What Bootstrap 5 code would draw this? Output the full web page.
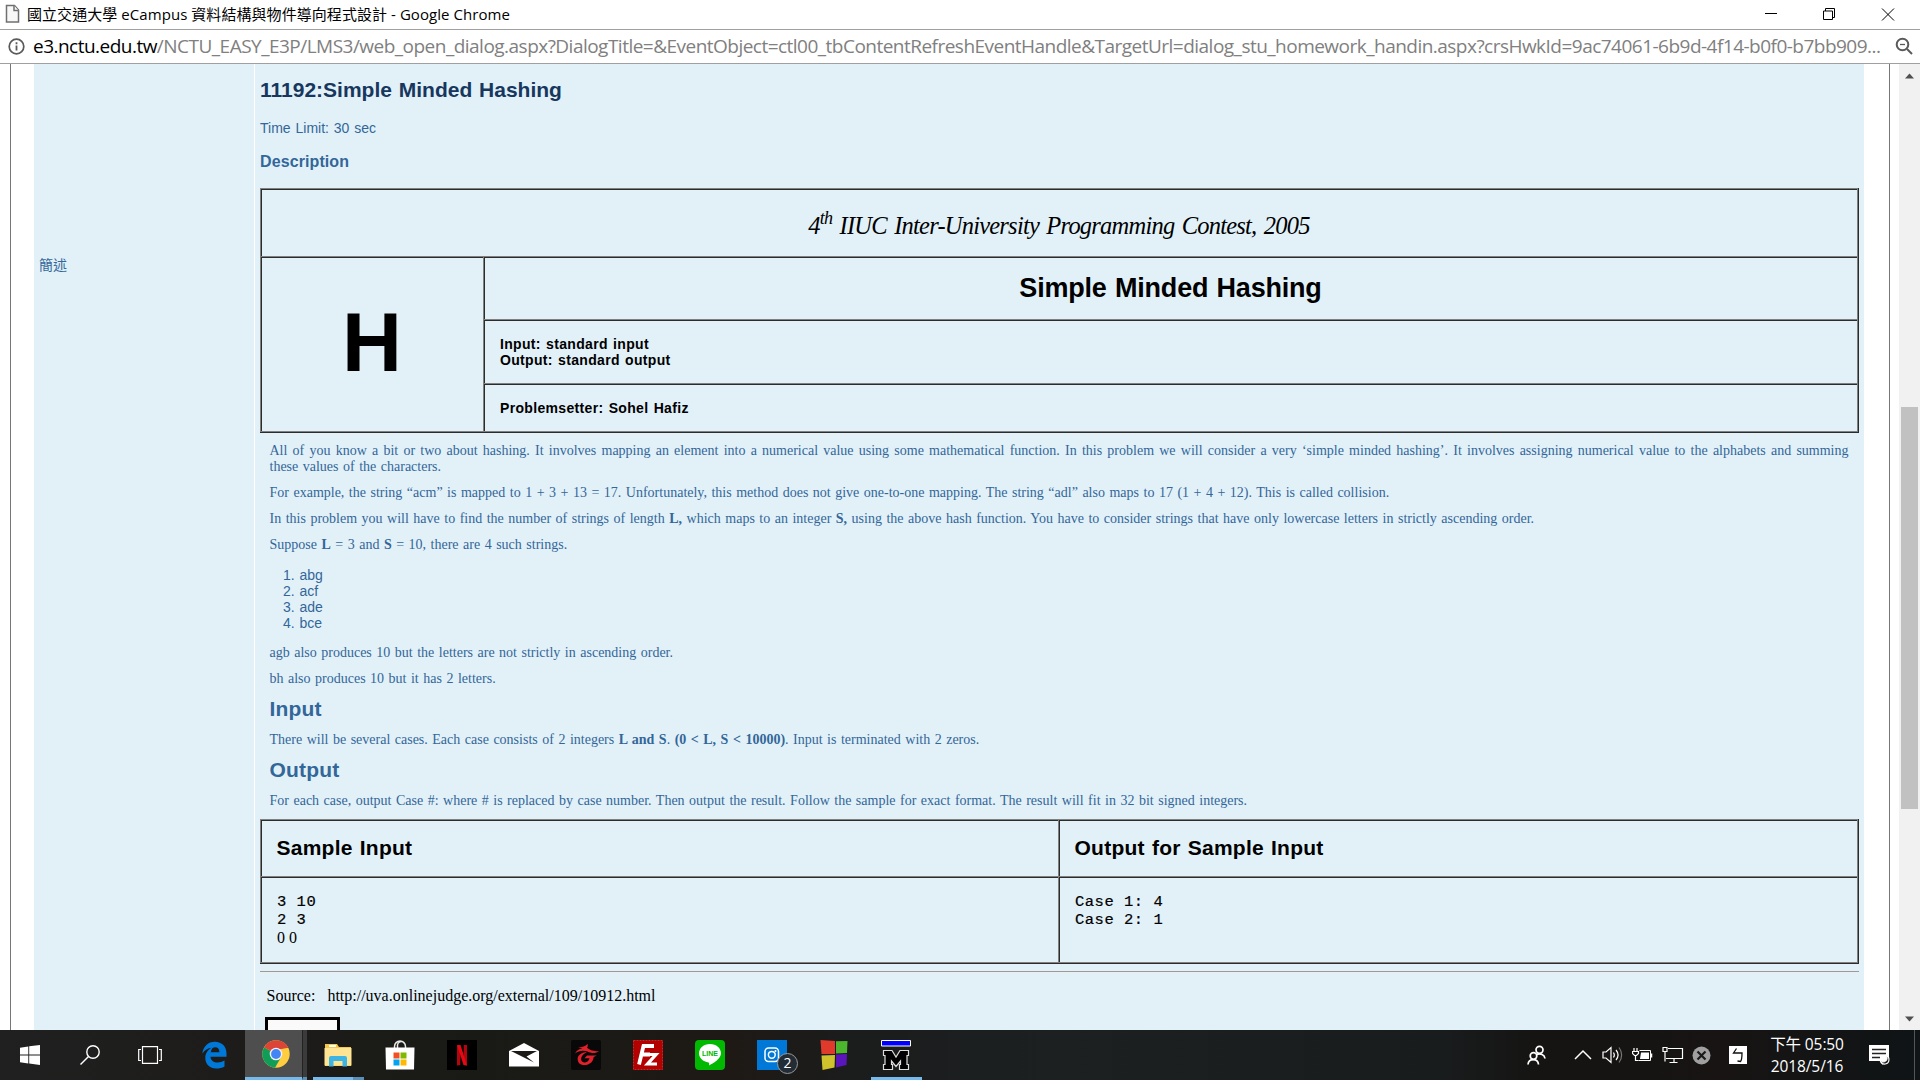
<!DOCTYPE html>
<html lang="zh-Hant">
<head>
<meta charset="utf-8">
<title>國立交通大學 eCampus 資料結構與物件導向程式設計</title>
<link href="https://cdn.jsdelivr.net/npm/bootstrap@5.3.0/dist/css/bootstrap.min.css" rel="stylesheet">
<style>
body{width:1920px;height:1080px;overflow:hidden;background:#fff;font-family:"Liberation Sans","Noto Sans CJK TC",sans-serif;font-size:14px;line-height:16px;color:#336699}
svg{flex-shrink:0;display:block}
.ui-font{font-family:"Open Sans","Noto Sans CJK TC",sans-serif}
.title-bar{height:30px;border-bottom:1px solid #a0a0a0;color:#000;padding:0 0 1px 5px;font-size:15px}
.title-text{margin-left:7px;line-height:28px;white-space:nowrap;letter-spacing:.06px}
.url-bar{height:34px;border-bottom:1px solid #a0a0a0;padding:0 7px 1px 8px;font-size:19px;line-height:32px;color:#808080;white-space:nowrap}
.url-text{margin-left:8px;letter-spacing:-.52px}
.page-area{height:966px;overflow:hidden;word-spacing:1px}
.page-frame{width:1880px;margin-left:10px;border-left:1px solid #777;border-right:1px solid #777;padding-left:23px}
.cell-label{width:220px;padding:193px 0 0 5px;background:#e2f1f8}
.cell-body{width:1609px;margin-left:1px;padding:0 5px;background:#e2f1f8;height:966px}
.scroll-track{width:21px;margin-left:9px;background:#f1f1f1}
.scroll-thumb{width:17px;height:402px;margin-top:328px;background:#c1c1c1}
h1,h2,h3{font-weight:700;margin:0}
.prob-title{font-size:21px;line-height:24px;margin-top:14px;color:#17375e}
.limit{margin:18px 0 0}
.desc-title{font-size:16px;line-height:18px;margin-top:17px;letter-spacing:.1px}
.grid-outer{border:solid #2c2c2c;border-width:0 1px 1px 0;color:#000}
.grid-inner{border:solid #808080;border-width:0 1px 1px 0}
.gcell{border:solid #808080;border-width:1px 0 0 1px;box-shadow:inset 1px 1px #2c2c2c}
.first-grid{margin-top:17px}
.second-grid{margin-top:10px}
.contest{height:68px;padding-top:7px;font:italic 24.500px/30px "Liberation Serif",serif;letter-spacing:-.78px;word-spacing:2px}
.contest sup{font-size:18px;top:-10px;line-height:0}
.letter-cell{width:223px;padding-bottom:3px;font-size:83px;line-height:80px;font-weight:700}
.name-cell{height:63px;font-size:27px;font-weight:700;letter-spacing:-.2px}
.io-cell{height:64px;padding:16px 0 0 16px;font-weight:700;letter-spacing:.33px}
.setter-cell{height:48px;padding:16px 0 0 16px;font-weight:700;letter-spacing:.33px}
.prose{font-family:"Liberation Serif",serif;margin:10px 10.500px 0 9.500px}
.prose p{margin:0 0 10px;text-align:justify}
.prose ol{margin:14px 0 14px;padding-left:30px;font-family:"Liberation Sans",sans-serif}
.prose h2{font-family:"Liberation Sans",sans-serif;font-size:21px;line-height:24px;margin:0 0 11px;letter-spacing:.2px}
.prose p.last{margin:0}
.sample-head{height:57px;padding:16px 0 0 15.500px;font-size:21px;line-height:24px;font-weight:700;letter-spacing:.25px}
.sample-data{height:86px;padding:16px 0 0 16px;font:15.500px/18px "Liberation Mono",monospace;letter-spacing:.5px;-webkit-text-stroke:.2px #000;white-space:pre;word-spacing:0}
.sample-l{width:798px}
.serif{font:16px/18px "Liberation Serif",serif;letter-spacing:0;-webkit-text-stroke:0}
.rule{height:2px;margin-top:7px;border-top:1px solid #9a9a9a;border-bottom:1px solid #eee}
.source{margin-top:14px;padding-left:6.500px;font:16px/18px "Liberation Serif",serif;color:#000;white-space:pre;word-spacing:0}
.stub-box{width:75px;height:30px;margin:12px 0 0 5px;border:3px solid #000;background:#fafafa}
.task-bar{height:50px;background:linear-gradient(90deg,#202020 0,#1c1b19 15%,#191a16 25%,#1e1915 38%,#1b1c1c 44%,#1c2021 55%,#191c1d 75%,#151413 80%,#171413 90%,#0f1416 100%)}
.slot{width:62px;height:50px;display:flex;align-items:center;justify-content:center}
.slot60{width:60px}
.slot-edge{margin-left:3px}
.slot-active{width:57px;background:#4e4e4e;border-bottom:3px solid #76b9ed;padding:0 0 0 5px}
.slot-stack{width:5px;height:50px;background:#3b3b3b;border-left:1px solid #222;border-bottom:3px solid #5a8fb8}
.underlined{position:relative}
.underlined::after{content:"";position:absolute;left:6px;bottom:0;width:51px;height:3px;background:#76b9ed}
.stacked::after{background:linear-gradient(90deg,#76b9ed 40px,#5a8fb8 40px)}
.count{position:absolute;left:36px;top:23px;width:21px;height:21px;border:1px solid #999;border-radius:50%;background:#222c36;color:#fff;font-size:14px;line-height:18px;text-align:center}
.clock{width:76px;margin-left:22px;color:#fff;font-size:15.500px;line-height:22.500px;letter-spacing:-.1px;white-space:nowrap;text-align:center}
.show-desk{width:6px;height:50px;border-left:1px solid #555}
</style>
<script src="https://cdn.jsdelivr.net/npm/bootstrap@5.3.0/dist/js/bootstrap.bundle.min.js"></script>
</head>
<body class="d-flex flex-column">
<header class="title-bar ui-font d-flex align-items-center">
  <svg width="15" height="20" viewBox="0 0 15 20" fill="#f8f8f8" stroke="#707070" stroke-width="1.5"><path d="M1.500 1.500h8l4 4.500v12H1.500z"/><path d="M9 1.500v5h4.500"/></svg>
  <span class="title-text">國立交通大學 eCampus 資料結構與物件導向程式設計 - Google Chrome</span>
  <svg class="ms-auto" width="156" height="28" fill="none" stroke="#000"><path d="M1 13.500h12M59.500 11h9v8.500h-9zM61.500 11v-2.500h9v9h-2M118 8.500l12 12M130 8.500l-12 12"/></svg>
</header>
<div class="url-bar ui-font d-flex align-items-center">
  <svg width="17" height="17" fill="none" stroke="#5a5a5a"><circle cx="8.500" cy="8.500" r="7.300" stroke-width="1.700"/><path d="M8.500 7.500v5M8.500 4.300v2" stroke-width="1.800"/></svg>
  <span class="url-text"><span class="text-black">e3.nctu.edu.tw</span>/NCTU_EASY_E3P/LMS3/web_open_dialog.aspx?DialogTitle=&amp;EventObject=ctl00_tbContentRefreshEventHandle&amp;TargetUrl=dialog_stu_homework_handin.aspx?crsHwkId=9ac74061-6b9d-4f14-b0f0-b7bb909...</span>
  <svg class="ms-auto" width="18" height="18" fill="none" stroke="#5a5a5a" stroke-width="2"><circle cx="7.500" cy="7.500" r="5.800"/><path d="M12 12l5 5"/><path d="M5 7.500h5" stroke-width="1.300"/></svg>
</div>
<div class="page-area d-flex">
  <div class="page-frame d-flex">
    <div class="cell-label">簡述</div>
    <main class="cell-body">
      <h1 class="prob-title">11192:Simple Minded Hashing</h1>
      <p class="limit">Time Limit: 30 sec</p>
      <h3 class="desc-title">Description</h3>
      <div class="grid-outer first-grid"><div class="grid-inner">
        <div class="gcell contest d-flex align-items-center justify-content-center"><span>4<sup>th</sup> IIUC Inter-University Programming Contest, 2005</span></div>
        <div class="d-flex">
          <div class="gcell letter-cell d-flex align-items-center justify-content-center">H</div>
          <div class="flex-grow-1">
            <div class="gcell name-cell d-flex align-items-center justify-content-center">Simple Minded Hashing</div>
            <div class="gcell io-cell">Input: standard input<br>Output: standard output</div>
            <div class="gcell setter-cell">Problemsetter: Sohel Hafiz</div>
          </div>
        </div>
      </div></div>
      <div class="prose">
        <p>All of you know a bit or two about hashing. It involves mapping an element into a numerical value using some mathematical function. In this problem we will consider a very ‘simple minded hashing’. It involves assigning numerical value to the alphabets and summing these values of the characters.</p>
        <p>For example, the string “acm” is mapped to 1 + 3 + 13 = 17. Unfortunately, this method does not give one-to-one mapping. The string “adl” also maps to 17 (1 + 4 + 12). This is called collision.</p>
        <p>In this problem you will have to find the number of strings of length <b>L,</b> which maps to an integer <b>S,</b> using the above hash function. You have to consider strings that have only lowercase letters in strictly ascending order.</p>
        <p>Suppose <b>L</b> = 3 and <b>S</b> = 10, there are 4 such strings.</p>
        <ol><li>abg</li><li>acf</li><li>ade</li><li>bce</li></ol>
        <p>agb also produces 10 but the letters are not strictly in ascending order.</p>
        <p>bh also produces 10 but it has 2 letters.</p>
        <h2>Input</h2>
        <p>There will be several cases. Each case consists of 2 integers <b>L and S</b>. <b>(0 &lt; L, S &lt; 10000)</b>. Input is terminated with 2 zeros.</p>
        <h2>Output</h2>
        <p class="last">For each case, output Case #: where # is replaced by case number. Then output the result. Follow the sample for exact format. The result will fit in 32 bit signed integers.</p>
      </div>
      <div class="grid-outer second-grid"><div class="grid-inner">
        <div class="d-flex">
          <div class="gcell sample-head sample-l">Sample Input</div>
          <div class="gcell sample-head flex-grow-1">Output for Sample Input</div>
        </div>
        <div class="d-flex">
          <div class="gcell sample-data sample-l">3 10
2 3
<span class="serif">0 0</span></div>
          <div class="gcell sample-data flex-grow-1">Case 1: 4
Case 2: 1</div>
        </div>
      </div></div>
      <div class="rule"></div>
      <div class="source">Source:   http://uva.onlinejudge.org/external/109/10912.html</div>
      <div class="stub-box"></div>
    </main>
  </div>
  <div class="scroll-track d-flex flex-column align-items-center">
    <svg width="9" height="6" style="margin-top:9px" fill="#505050"><path d="M0 5.500l4.500-5 4.500 5z"/></svg>
    <div class="scroll-thumb"></div>
    <svg class="mt-auto mb-2" width="9" height="6" fill="#505050"><path d="M0 .5l4.500 5 4.500-5z"/></svg>
  </div>
</div>
<footer class="task-bar ui-font d-flex align-items-center">
  <!-- start, search, task view -->
  <div class="slot slot60"><svg width="20" height="20" fill="#fff"><path d="M0 2.700l8.300-1.200v8H0zM9.200 1.300L20 0v9.500H9.200zM0 10.400h8.300v8.100L0 17.300zM9.200 10.400H20V20L9.200 18.600z"/></svg></div>
  <div class="slot slot60"><svg width="20" height="20" fill="none" stroke="#fff" stroke-width="1.400"><circle cx="13" cy="7" r="6.200"/><path d="M8.500 11.500L.5 19.500"/></svg></div>
  <div class="slot slot60"><svg width="24" height="18" fill="none" stroke="#fff" stroke-width="1.200"><path d="M4.500.6h15v16.800h-15zM3 3.500H.7v11H3M21 3.500h2.300v11H21"/></svg></div>
  <!-- Edge -->
  <div class="slot slot-edge"><svg width="25" height="28" fill="#0078d7"><path d="M.3 12.500C1.200 5.500 6.200.8 12.800.8c7.300 0 11.700 5 11.700 11.700v3.200H8.500c.2 4 3.500 5.800 7 5.800 2.700 0 4.800-.7 7-2v6c-2.300 1.400-5.200 2-8.300 2C7.700 27.500 3.300 23.300 3.300 17c0-4.700 2.400-8.300 6.500-10.300C6 7 2.500 9 .3 12.500zM8.700 11.200h8.700c0-3.200-1.500-5-4.100-5-2.500 0-4.200 1.900-4.600 5z"/></svg></div>
  <!-- Chrome -->
  <div class="slot slot-active"><svg width="28" height="28" viewBox="0 0 28 28"><circle cx="14" cy="14" r="13.700" fill="#ffcd40"/><path d="M14 14L2.100 7.200A13.700 13.700 0 0 0 13 27.700l6-10.500z" fill="#0f9d58"/><path d="M14 14L2.100 7.200A13.700 13.700 0 0 1 26.300 8H14z" fill="#db4437"/><path d="M14 7.700h12.200L14 10z" fill="#db4437"/><circle cx="14" cy="14" r="6.300" fill="#f1f1f1"/><circle cx="14" cy="14" r="4.900" fill="#4285f4"/></svg></div>
  <div class="slot-stack"></div>
  <!-- File explorer -->
  <div class="slot underlined stacked"><svg width="28" height="24"><path d="M1 1h12l2 3h12v19H1z" fill="#f5c84c"/><path d="M5 2h7v2H5z" fill="#fff"/><path d="M.5 5h27v17.500H.5z" fill="#ffe493"/><path d="M5 23.500V15a2 2 0 0 1 2-2h14a2 2 0 0 1 2 2v8.500h-4.500V18h-9v5.500z" fill="#3eb4e4"/></svg></div>
  <!-- Store -->
  <div class="slot"><svg width="30" height="30"><path d="M9.500 8V6.500a5.500 5.500 0 0 1 11 0V8M12.500 8V5a4 4 0 0 1 6-3" fill="none" stroke="#e8e8e8" stroke-width="1.500"/><path d="M.5 7.500h29L29 29.500H1z" fill="#fff"/><path d="M8.500 12.500h6v6h-6z" fill="#f25022"/><path d="M15.500 12.500h6v6h-6z" fill="#7fba00"/><path d="M8.500 19.500h6v6h-6z" fill="#00a4ef"/><path d="M15.500 19.500h6v6h-6z" fill="#ffb900"/></svg></div>
  <!-- Netflix -->
  <div class="slot"><svg width="30" height="30"><path d="M0 0h30v30H0z" fill="#000"/><path d="M10 5h3.300v20L10 25.500zM16.700 5H20v20.500l-3.300-.5z" fill="#b1060f"/><path d="M10 5h3.500L20 25.500 16.500 25z" fill="#e50914"/></svg></div>
  <!-- Mail -->
  <div class="slot"><svg width="30" height="24"><path d="M0 8L15 0l15 8v15.500H0z" fill="#fff"/><path d="M2 8h26l-10.500 5.500 7.500 6L2 8z" fill="#1b1a17"/></svg></div>
  <!-- Garena -->
  <div class="slot"><svg width="30" height="30"><rect width="30" height="30" rx="2" fill="#080808"/><g fill="#e0202a"><path d="M4 13.500c1.500-3 4-4.500 7.500-5.200L7 7.800C11 7 14.500 6.300 16.500 4c.6 1.500.3 2.700-.6 3.800 3 2.200 7 4 12.100 3.200-3 2.700-7.500 2.700-11.500.6C12 10 8 10.500 4 13.500z"/><path d="M16 12c-6 .3-9.800 3.500-9.300 7.800.4 3.900 3.800 5.800 8 5.200 4.800-.7 7.500-3.500 8-8l3-1.500H16l-2.500 2.700h5c-.8 2.600-2.200 4.100-4.500 4.200-2.200.1-3.900-1.100-3.900-3.400 0-3 2.400-5.200 5.900-7z"/></g></svg></div>
  <!-- FileZilla -->
  <div class="slot"><svg width="30" height="30"><rect x=".5" y=".5" width="29" height="29" fill="#b30000" stroke="#e02020" stroke-dasharray="2 1"/><g fill="none" stroke="#fff" stroke-width="3.800"><path d="M6 24.500L10.500 6H21M8 14.500h9"/><path d="M14.500 14.500h8.500L14.500 24H24" stroke-width="3.200"/></g></svg></div>
  <!-- LINE -->
  <div class="slot"><svg width="30" height="30"><rect width="30" height="30" rx="4" fill="#00b900"/><path d="M15 4C8.600 4 4 8.200 4 13.300c0 4.600 4 8.400 9.500 9.100.9.200.7 1.400.5 3.100 4-2 12-6.500 12-12.200C26 8.200 21.400 4 15 4z" fill="#fff"/><text x="15" y="16.300" text-anchor="middle" font-family="Liberation Sans,sans-serif" font-size="7" font-weight="700" fill="#00b900">LINE</text></svg></div>
  <!-- Instagram -->
  <div class="slot position-relative"><svg width="30" height="30"><path d="M0 0h30v30H0z" fill="#0078d7"/><g fill="none" stroke="#fff" stroke-width="1.500"><rect x="8" y="8" width="13.500" height="13.500" rx="3.500"/><circle cx="14.800" cy="14.800" r="3.400"/></g><circle cx="18.500" cy="11" r="1" fill="#fff"/></svg><span class="count">2</span></div>
  <!-- coloured blocks -->
  <div class="slot"><svg width="28" height="30"><path d="M.5 0L15 1v13H1.500z" fill="#e03a2c"/><path d="M16 1.200L27.500 1 27 13l-11 .5z" fill="#4cb62f"/><path d="M1.500 15.500L15 15l-.5 12.500L2.500 30z" fill="#cfc22d"/><path d="M16 14.500l11-.5-.5 11-10.500 2.500z" fill="#5a16bb"/></svg></div>
  <div class="slot underlined"><svg width="30" height="30"><path d="M.5.500h29v5.500H.5z" fill="#00f" stroke="#fff"/><path d="M2.500 10.500H11l4 6.500 4-6.500h8.500v5H26v9h1.500v5h-9v-5h1V21l-4.500 5.500L10.500 21v3.500h1v5h-9v-5H4v-9H2.500z" fill="#000" stroke="#ddd" stroke-width="1.200"/></svg></div>

  <!-- tray -->
  <div class="ms-auto d-flex align-items-center">
    <svg width="20" height="20" fill="none" stroke="#fff" stroke-width="1.700"><circle cx="12.500" cy="4.800" r="3.500"/><path d="M9.500 9.500c4-1.500 8 0 8.500 4"/><circle cx="6.500" cy="11" r="3.300"/><path d="M1 19.500c.5-6.500 10-6.500 10.500 0"/></svg>
    <svg style="margin:0 10px 0 26px" width="19" height="12" fill="none" stroke="#fff" stroke-width="1.500"><path d="M2 10l8-8 8 8"/></svg>
    <svg width="22" height="20" fill="none" stroke="#fff" stroke-width="1.200"><path d="M1 7h3l5-4.500v15L4 13H1z"/><path d="M11.500 7.500c1 1.500 1 3.500 0 5M14 5c2.500 3 2.500 7 0 10"/><path d="M17 2.500c3.500 4.500 3.500 10.500 0 15" stroke="#777"/></svg>
    <svg style="margin-left:8px" width="22" height="16" fill="none" stroke="#fff"><path d="M2 1v4M5 1v4M.5 4.500h6v2l-2 2h-2l-2-2zM3.500 8v5.500h3" stroke-width="1.200"/><path d="M7.500 3.500h11v10h-12"/><path d="M9 5.500h8v6.500H8z" fill="#fff" stroke="none"/><path d="M19.500 6.500v4" stroke-width="1.500"/></svg>
    <svg style="margin-left:8px" width="22" height="18" fill="none" stroke="#fff"><path d="M6 2.500h14.500v10H4M12 12.500v4M7.500 16.500h8M1 1.500h4v4H1zM3 5.500v10" stroke-width="1.200"/></svg>
    <svg style="margin-left:8px" width="19" height="19"><circle cx="9.500" cy="9.500" r="9" fill="#a0a0a0"/><path d="M5.500 5.500l8 8M13.500 5.500l-8 8" stroke="#1b1919" stroke-width="2.200"/></svg>
    <svg style="margin-left:18px" width="18" height="18" fill="none"><path d="M0 0h18v18H0z" fill="#fff"/><path d="M7.500 2.500L4.500 7h8.500c0 4 0 7-1.500 8.500L8.500 15" stroke="#111" stroke-width="1.300"/></svg>
    <div class="clock">下午 05:50<br>2018/5/16</div>
    <svg style="margin-left:24px;margin-right:23px" width="22" height="22"><path d="M0 1h20v16h-4l-3 4v-4H0z" fill="#fff"/><path d="M3 5.500h14M3 9.500h14M3 13.500h8" stroke="#222" stroke-width="1.300"/><path d="M17.500 11.500c2 5-2 7.500-6 6 1.500 4 8.500 3.500 8.500-2 0-2-1-3.500-2.500-4z" fill="#222" stroke="#fff" stroke-width="1.100"/></svg>
    <div class="show-desk"></div>
  </div>
</footer>
</body>
</html>
